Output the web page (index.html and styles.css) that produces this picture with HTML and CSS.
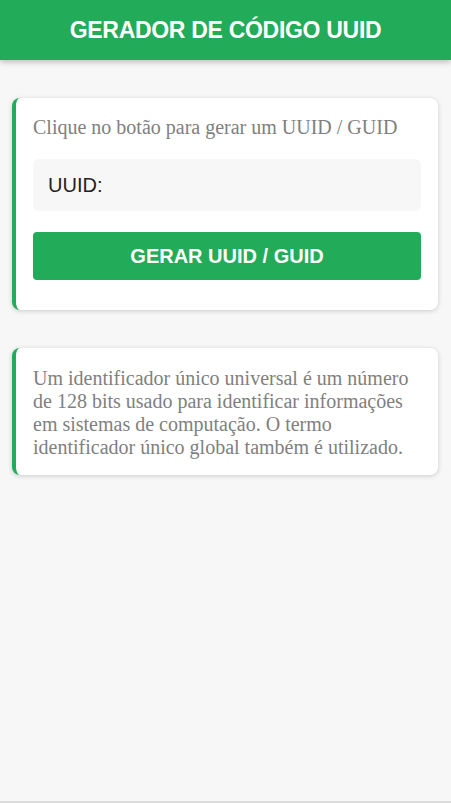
FILE: index.html
```html
<!DOCTYPE html>
<html lang="pt">
<head>
<meta charset="utf-8">
<title>Gerador de código UUID</title>
<link rel="stylesheet" href="styles.css">
</head>
<body>
<header class="topbar">
  <h1 class="title">GERADOR DE CÓDIGO UUID</h1>
</header>
<main class="content">
  <section class="card">
    <p class="hint">Clique no botão para gerar um UUID / GUID</p>
    <div class="output">UUID:</div>
    <button class="btn" type="button">GERAR UUID / GUID</button>
  </section>
  <section class="card card-info">
    <p class="info">Um identificador único universal é um número de 128 bits usado para identificar informações em sistemas de computação. O termo identificador único global também é utilizado.</p>
  </section>
</main>
</body>
</html>
```
FILE: styles.css
```css
html, body {
  margin: 0;
  padding: 0;
}
body {
  background: #f7f7f7;
  font-family: "Liberation Sans", Arial, sans-serif;
  min-height: 801px;
  border-bottom: 2px solid #dcdcdc;
  box-sizing: content-box;
}
.topbar {
  height: 60px;
  background: #22ab58;
  display: flex;
  align-items: center;
  justify-content: center;
  box-shadow: 0 2px 6px rgba(0,0,0,0.25);
}
.title {
  margin: 0;
  color: #fff;
  font-size: 23px;
  font-weight: bold;
  letter-spacing: -0.3px;
}
.content {
  display: flex;
  flex-direction: column;
  gap: 38px;
  padding: 38px 13px 0 12px;
}
.card {
  background: #fff;
  border-left: 4px solid #22ab58;
  border-radius: 8px;
  box-shadow: 0 1px 5px rgba(0,0,0,0.18);
  padding: 18px 17px 30px 17px;
}
.hint {
  margin: 0 0 20px 0;
  font-family: "Liberation Serif", "Times New Roman", serif;
  font-size: 20px;
  line-height: 23px;
  color: #808080;
}
.output {
  background: #f7f7f7;
  border-radius: 6px;
  height: 52px;
  padding: 0 15px;
  display: flex;
  align-items: center;
  font-size: 20px;
  color: #222;
}
.btn {
  display: block;
  width: 100%;
  margin-top: 21px;
  height: 48px;
  border: 0;
  border-radius: 4px;
  background: #22ab58;
  color: #fff;
  font-family: "Liberation Sans", Arial, sans-serif;
  font-size: 20px;
  font-weight: bold;
}
.card-info {
  padding: 19px 17px 16px 17px;
}
.info {
  margin: 0;
  font-family: "Liberation Serif", "Times New Roman", serif;
  font-size: 20px;
  line-height: 23px;
  color: #808080;
}
```
